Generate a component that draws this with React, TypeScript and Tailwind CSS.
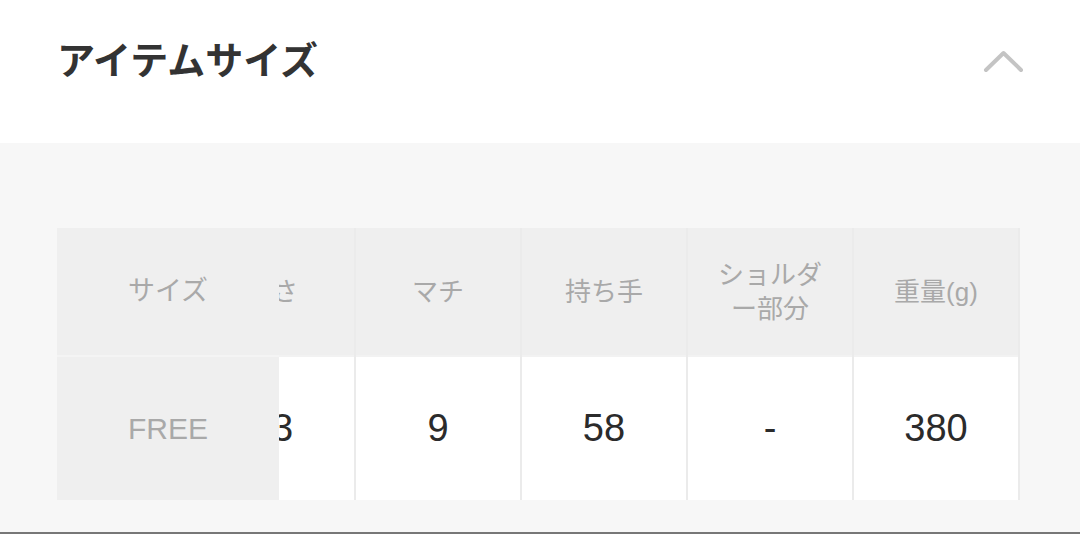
import { useState } from "react";

const font = "font-['Liberation_Sans','Noto_Sans_CJK_JP',sans-serif]";

const columns = [
  { label: "高さ", value: "33" },
  { label: "マチ", value: "9" },
  { label: "持ち手", value: "58" },
  { label: "ショルダー部分", value: "-" },
  { label: "重量(g)", value: "380" },
];

export default function App() {
  const [open, setOpen] = useState(true);

  return (
    <div className={`w-[1080px] h-[534px] overflow-hidden flex flex-col bg-white ${font}`}>
      <header className="h-[143px] flex items-center justify-between pl-[57px] pr-[56px] pb-[20px]">
        <h2 className="text-[38px] font-bold text-[#333]">アイテムサイズ</h2>
        <button onClick={() => setOpen((o) => !o)} className="w-[41px] h-[24px] flex items-center justify-center">
          <svg width="41" height="24" viewBox="0 0 41 24" fill="none">
            <polyline
              points="3,20 20.5,3 38,20"
              stroke="#c4c4c4"
              strokeWidth="4"
              strokeLinecap="round"
              strokeLinejoin="round"
            />
          </svg>
        </button>
      </header>

      <section className="flex-1 bg-[#f7f7f7] pt-[85px] pl-[57px]">
        {open && (
          <div className="flex w-[965px]">
            {/* fixed column */}
            <div className="w-[222px] shrink-0 flex flex-col bg-[#efefef] text-[#a9a9a9]">
              <div className="h-[129px] flex items-center justify-center text-[27px] border-b-2 border-[#f4f4f4]">
                サイズ
              </div>
              <div className="h-[143px] flex items-center justify-center text-[30px]">FREE</div>
            </div>

            {/* scrolled part */}
            <div className="flex-1 overflow-hidden">
              <div className="flex ml-[-89px]">
                {columns.map((c) => (
                  <div key={c.label} className="w-[166px] shrink-0 flex flex-col border-r-2 border-[#ebebeb]">
                    <div className="h-[129px] px-5 flex items-center justify-center text-center bg-[#efefef] text-[#a9a9a9] text-[26px] leading-[34px] border-b-2 border-[#f2f2f2]">
                      {c.label}
                    </div>
                    <div className="h-[143px] flex items-center justify-center bg-white text-[#2b2b2b] text-[38px]">
                      {c.value}
                    </div>
                  </div>
                ))}
              </div>
            </div>
          </div>
        )}
      </section>
      <div className="h-[2px] bg-[#777]" />
    </div>
  );
}
